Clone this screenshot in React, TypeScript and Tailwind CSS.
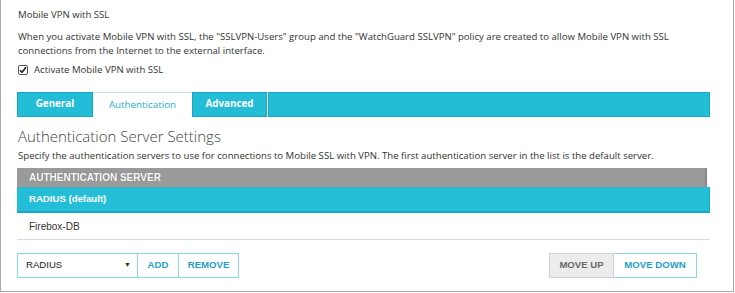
import React from "react";

export default function App() {
  return (
    <div className="w-[735px] h-[293px] bg-white">
      <div className="w-[734px] h-[292px] border-l border-r border-b border-[#a9a9a9] bg-white px-[16px] pt-[8px] text-[#333] font-['Open_Sans',sans-serif]">
        <div className="pl-[1px] text-[9.6px] leading-[14px] text-[#333]">Mobile VPN with SSL</div>
        <div className="pl-[1px] mt-[8px] text-[9.6px] leading-[14px] text-[#333] w-[690px]">
          When you activate Mobile VPN with SSL, the "SSLVPN-Users" group and the "WatchGuard SSLVPN" policy are created to allow Mobile VPN with SSL connections from the Internet to the external interface.
        </div>
        <div className="pl-[1px] mt-[5px] flex items-center h-[14px]">
          <span className="w-[10px] h-[10px] border border-[#555] rounded-[2px] bg-white flex items-center justify-center">
            <svg width="8" height="8" viewBox="0 0 8 8">
              <path d="M1 4.2 L3 6.3 L7 1.3" fill="none" stroke="#222" strokeWidth="1.6" />
            </svg>
          </span>
          <span className="ml-[6px] text-[9.6px] leading-[14px] text-[#333]">Activate Mobile VPN with SSL</span>
        </div>

        <div className="mt-[15px] flex h-[25px] w-[693px]">
          <div className="w-[76px] h-full bg-[#24bdd8] border border-[#19a6c2] flex items-center justify-center text-white font-bold text-[9.8px]">
            General
          </div>
          <div className="w-[99px] h-full bg-white border-t border-[#c9dfe5] flex items-center justify-center text-[#22aed0] text-[9.8px]">
            Authentication
          </div>
          <div className="w-[75px] h-full bg-[#24bdd8] border border-[#19a6c2] flex items-center justify-center text-white font-bold text-[9.8px]">
            Advanced
          </div>
          <div className="w-px h-full bg-white" />
          <div className="flex-1 h-full bg-[#24bdd8] border border-[#19a6c2]" />
        </div>

        <div className="pl-[1px] mt-[10px] text-[15px] leading-[18px] text-[#444] font-light">
          Authentication Server Settings
        </div>
        <div className="pl-[1px] mt-[4px] text-[9.6px] leading-[14px] text-[#333]">
          Specify the authentication servers to use for connections to Mobile SSL with VPN. The first authentication server in the list is the default server.
        </div>

        <div className="mt-[5px] w-[693px] font-['Liberation_Sans',Arial,sans-serif]">
          <div className="w-[690px] h-[19px] bg-[#9a9a9a] border-r-2 border-[#888] border-b border-b-[#c98c78] flex items-center pl-[12px] text-white font-bold text-[10px] [text-shadow:0_0_1px_rgba(0,0,0,0.4)]">
            AUTHENTICATION SERVER
          </div>
          <div className="w-[693px] h-[26px] bg-[#24bed9] border-t border-t-[#14c4e6] border-b-2 border-b-[#1aa7c4] border-r border-r-[#1aa7c4] flex items-center pl-[12px] text-white font-bold text-[9.6px]">
            RADIUS (default)
          </div>
          <div className="w-[693px] h-[27px] border-b border-[#dcdcdc] flex items-center pl-[12px] text-[#333] text-[10px]">
            Firebox-DB
          </div>
        </div>

        <div className="mt-[13px] flex w-[693px] h-[25px] font-['Liberation_Sans',Arial,sans-serif]">
          <div className="flex h-full">
            <div className="w-[121px] h-full border border-[#8ad6e6] flex items-center justify-between pl-[8px] pr-[6px] text-[9.6px] text-[#222]">
              <span>RADIUS</span>
              <span className="text-[7px] text-[#333]">▼</span>
            </div>
            <div className="w-[41px] h-full border-t border-b border-r border-[#8ad6e6] flex items-center justify-center text-[9.6px] font-bold text-[#1f9fc9]">
              ADD
            </div>
            <div className="w-[60px] h-full border-t border-b border-r border-[#8ad6e6] flex items-center justify-center text-[9.6px] font-bold text-[#1f9fc9]">
              REMOVE
            </div>
          </div>
          <div className="flex-1" />
          <div className="flex h-full mr-[13px]">
            <div className="w-[65px] h-full bg-[#ececec] border border-[#d2d2d2] flex items-center justify-center text-[9.6px] font-bold text-[#6a6a6a]">
              MOVE UP
            </div>
            <div className="w-[83px] h-full bg-white border-t border-b border-r border-[#8ad6e6] flex items-center justify-center text-[9.6px] font-bold text-[#1f9fc9]">
              MOVE DOWN
            </div>
          </div>
        </div>
      </div>
    </div>
  );
}
